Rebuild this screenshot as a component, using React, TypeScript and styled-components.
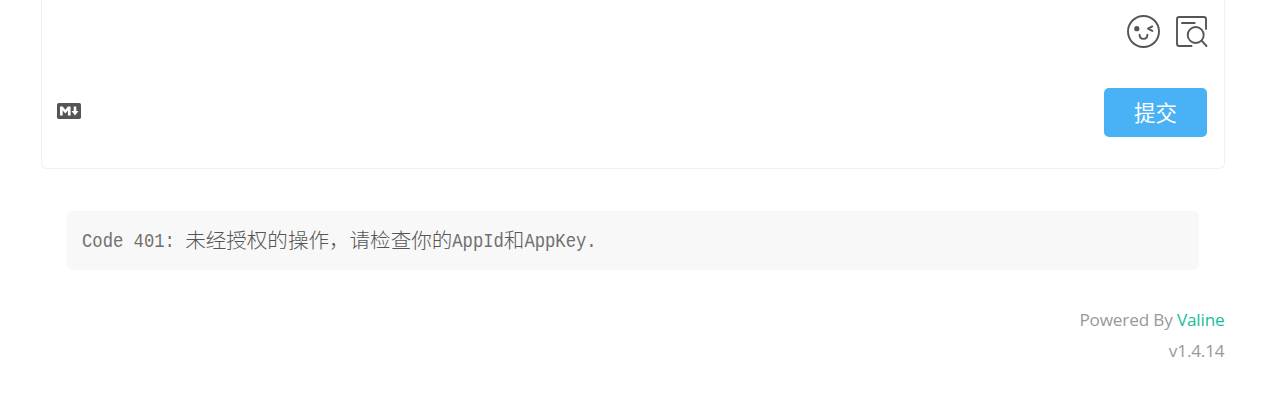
import React from "react";
import styled, { createGlobalStyle } from "styled-components";

const GlobalStyle = createGlobalStyle`
  * { box-sizing: border-box; }
  body { margin: 0; background: #fff; overflow: hidden; }
`;

const Page = styled.main`
  width: 1264px;
  height: 400px;
  padding: 0 39px 0 41px;
  font-family: "Open Sans", "Noto Sans CJK SC", sans-serif;
`;

const Editor = styled.section`
  height: 169px;
  padding: 14px 17px 31px 15px;
  border: 1px solid #f0f0f0;
  border-top: 0;
  border-radius: 0 0 6px 6px;
  display: flex;
  flex-direction: column;
  justify-content: space-between;
`;

const Tools = styled.div`
  display: flex;
  justify-content: flex-end;
  gap: 14px;
  margin-right: -3px;
`;

const ToolIcon = styled.svg`
  display: block;
  width: 35px;
  height: 35px;
  fill: none;
  stroke: #555;
  stroke-width: 1.9;
  stroke-linecap: round;
  stroke-linejoin: round;
`;

const Actions = styled.div`
  display: flex;
  justify-content: space-between;
  align-items: flex-start;
`;

const MarkdownIcon = styled.svg`
  display: block;
  width: 24px;
  height: 16px;
  margin-top: 15px;
`;

const Submit = styled.button`
  width: 103px;
  height: 49px;
  padding: 0 0 1px;
  border: 0;
  border-radius: 5px;
  background: #49b1f5;
  color: #fff;
  font: 400 21.5px/48px "Noto Sans CJK SC", sans-serif;
`;

const Message = styled.pre`
  height: 59px;
  margin: 42px 26px 0;
  padding: 0 15px;
  border-radius: 5px;
  background: #f8f8f8;
  color: #555;
  font: 300 20.55px/57px "Noto Sans CJK SC", monospace;
  white-space: pre;
`;

const Latin = styled.span`
  display: inline-block;
  color: #707070;
  font-family: "Liberation Mono", monospace;
  font-size: 17.2px;
  transform: translateY(-1px) scaleY(1.2);
  transform-origin: 50% 56%;
`;

const Footer = styled.footer`
  margin-top: 34px;
  padding-right: 0.5px;
  color: #999;
  font-size: 17.2px;
  letter-spacing: -0.18px;
  line-height: 31px;
  text-align: right;
`;

const Link = styled.a`
  color: #1abc9c;
`;

export default function App() {
  return (
    <>
      <GlobalStyle />
      <Page>
        <Editor>
          <Tools>
            <ToolIcon viewBox="0 0 35 35">
              <circle cx="17.5" cy="17.5" r="15.5" />
              <circle cx="10.8" cy="14.7" r="2.6" fill="#555" stroke="none" />
              <path d="M26.3 12.4 22 14.6 26.3 16.9M13.6 20.8c0 5.4 7.8 5.4 7.8 0" />
            </ToolIcon>
            <ToolIcon viewBox="0 0 35 35">
              <path d="M31 15V5.3Q31 3 28.7 3H4.3Q2 3 2 5.3V29.7Q2 32 4.3 32H16.5M7 9H19.7M26.6 26.7 31.5 32" />
              <circle cx="20.7" cy="21" r="8" />
            </ToolIcon>
          </Tools>
          <Actions>
            <MarkdownIcon viewBox="0 0 24 16">
              <rect width="24" height="16" rx="1.8" fill="#555" />
              <path fill="#fff" d="M3 12.4V3.6H5.7L8.3 6.8 10.9 3.6H13.6V12.4H10.9V7.4L8.3 10.5 5.7 7.4V12.4ZM16.7 3.6H19.3V8H21.5L18 12.6 14.5 8H16.7Z" />
            </MarkdownIcon>
            <Submit>提交</Submit>
          </Actions>
        </Editor>
        <Message>
          <Latin>{"Code 401: "}</Latin>未经授权的操作，请检查你的<Latin>AppId</Latin>和<Latin>AppKey.</Latin>
        </Message>
        <Footer>
          <div>Powered By <Link>Valine</Link></div>
          <div>v1.4.14</div>
        </Footer>
      </Page>
    </>
  );
}
